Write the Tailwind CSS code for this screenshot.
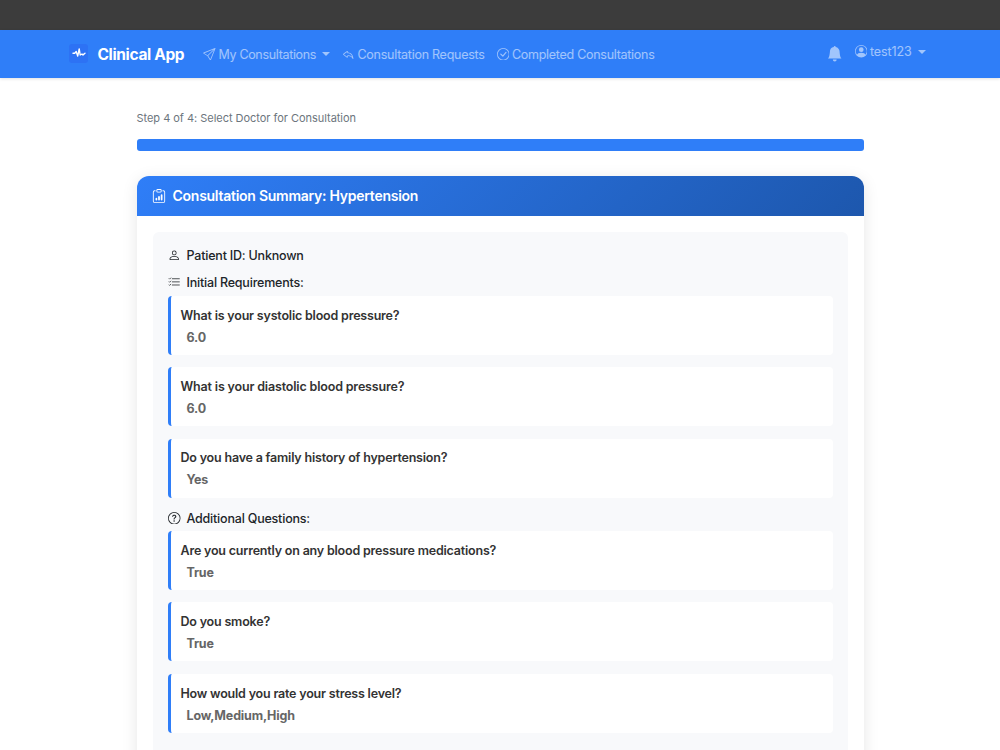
<!DOCTYPE html>
<html lang="en">
<head>
    <meta charset="UTF-8">
    <meta name="viewport" content="width=device-width, initial-scale=1.0">
    <title>Clinical App</title>
    <script src="https://cdn.jsdelivr.net/npm/@tailwindcss/browser@4"></script>
</head>
<body class="h-[750px] overflow-hidden bg-white font-['Inter',sans-serif] text-[12.5px] text-[#212529]">

    <div class="h-[29.5px] bg-[#3c3c3c]"></div>

    <!-- Navbar -->
    <nav class="flex h-[48.5px] items-center bg-[#2f7ef8] pl-[69px] pr-[74.5px] tracking-[-0.26px] text-white/55 shadow-[0_1px_3px_rgba(0,0,0,0.12)]">
        <div class="flex size-[19px] items-center justify-center rounded-[3px] bg-[#2d72f4]">
            <svg class="h-[13px] w-[14px] text-white" viewBox="0 0 14 13" fill="none" stroke="currentColor" stroke-width="1.4" stroke-linecap="round" stroke-linejoin="round">
                <path d="M1 6.2h1.7l1.5-1.7 1.5 4.6L7.2 1.9l1 6.1 1.8-1 1 .9 2-1.6"/>
            </svg>
        </div>
        <span class="ml-[9.5px] w-[105.5px] whitespace-nowrap pt-[2px] text-[15.5px] font-bold tracking-[-0.35px] text-white">Clinical App</span>
        <a class="flex items-center whitespace-nowrap">
            <svg class="mr-[3px] size-[12.5px]" viewBox="0 0 16 16" fill="currentColor"><path d="M15.854.146a.5.5 0 0 1 .11.54l-5.819 14.547a.75.75 0 0 1-1.329.124l-3.178-4.995L.643 7.184a.75.75 0 0 1 .124-1.33L15.314.037a.5.5 0 0 1 .54.11ZM6.636 10.07l2.761 4.338L14.13 2.576zm6.787-8.201L1.591 6.602l4.339 2.76z"/></svg>
            <span class="w-[103px] pt-[3px] tracking-[-0.33px]">My Consultations</span>
            <span class="border-x-[4px] border-t-[4px] border-x-transparent"></span>
        </a>
        <a class="ml-[12.5px] flex items-center whitespace-nowrap">
            <svg class="mr-[3px] size-[12.5px]" viewBox="0 0 16 16" fill="currentColor"><path d="M6.598 5.013a.144.144 0 0 1 .202.134V6.3a.5.5 0 0 0 .5.5c.667 0 2.013.005 3.3.822.984.624 1.99 1.76 2.595 3.876-1.02-.983-2.185-1.516-3.205-1.799a8.7 8.7 0 0 0-1.921-.306 7 7 0 0 0-.798.008h-.013l-.005.001h-.001L7.3 9.9l-.05-.498a.5.5 0 0 0-.45.498v1.153c0 .108-.11.176-.202.134L2.614 8.254l-.042-.028a.147.147 0 0 1 0-.252l.042-.028zM7.8 10.386q.103 0 .223.006c.434.02 1.034.086 1.7.271 1.326.368 2.896 1.202 3.94 3.08a.5.5 0 0 0 .933-.305c-.464-3.71-1.886-5.662-3.46-6.66-1.245-.79-2.527-.942-3.336-.971v-.66a1.144 1.144 0 0 0-1.767-.96l-3.994 2.94a1.147 1.147 0 0 0 0 1.946l3.994 2.94a1.144 1.144 0 0 0 1.767-.96z"/></svg>
            <span class="w-[127px] pt-[3px]">Consultation Requests</span>
        </a>
        <a class="ml-[12px] flex items-center whitespace-nowrap">
            <svg class="mr-[3px] size-[12.5px]" viewBox="0 0 16 16" fill="currentColor"><path d="M8 15A7 7 0 1 1 8 1a7 7 0 0 1 0 14m0 1A8 8 0 1 0 8 0a8 8 0 0 0 0 16"/><path d="M10.97 4.97a.235.235 0 0 0-.02.022L7.477 9.417 5.384 7.323a.75.75 0 0 0-1.06 1.06L6.97 11.03a.75.75 0 0 0 1.079-.02l3.992-4.99a.75.75 0 0 0-1.071-1.05"/></svg>
            <span class="pt-[3px] tracking-[-0.28px]">Completed Consultations</span>
        </a>
        <svg class="ml-auto mr-[12.5px] size-[15.5px]" viewBox="0 0 16 16" fill="currentColor"><path d="M8 16a2 2 0 0 0 2-2H6a2 2 0 0 0 2 2m.995-14.901a1 1 0 1 0-1.99 0A5 5 0 0 0 3 6c0 1.098-.5 6-2 7h14c-1.5-1-2-5.902-2-7 0-2.42-1.72-4.44-4.005-4.901"/></svg>
        <a class="mb-[4.5px] flex items-center whitespace-nowrap">
            <svg class="mr-[3px] size-[12.5px]" viewBox="0 0 16 16" fill="currentColor"><path d="M11 6a3 3 0 1 1-6 0 3 3 0 0 1 6 0"/><path fill-rule="evenodd" d="M0 8a8 8 0 1 1 16 0A8 8 0 0 1 0 8m8-7a7 7 0 0 0-5.468 11.37C3.242 11.226 4.805 10 8 10s4.757 1.225 5.468 2.37A7 7 0 0 0 8 1"/></svg>
            <span class="w-[47.5px] pt-[2px] tracking-[-0.1px]">test123</span>
            <span class="border-x-[4px] border-t-[4px] border-x-transparent"></span>
        </a>
    </nav>

    <main class="ml-[136.5px] w-[727.5px] pt-[31px]">
        <!-- Progress -->
        <p class="h-[29.5px] text-[11px] leading-[18px] tracking-[-0.03px] text-[#6c757d]">Step 4 of 4: Select Doctor for Consultation</p>
        <div class="h-[12.5px] rounded-[3px] bg-[#2f7ef8]"></div>

        <!-- Summary card -->
        <section class="mt-[25px] h-[700px] overflow-hidden rounded-[12px] bg-white shadow-[0_3px_16px_rgba(0,0,0,0.1)]">
            <header class="flex h-[40px] items-center bg-[linear-gradient(135deg,#2f7ef8,#1d57ad)] pl-[15.5px] text-white">
                <svg class="mr-[6.5px] size-[14px]" viewBox="0 0 16 16" fill="currentColor"><path d="M4 11a1 1 0 1 1 2 0v1a1 1 0 1 1-2 0zm6-4a1 1 0 1 1 2 0v5a1 1 0 1 1-2 0zM7 9a1 1 0 0 1 2 0v3a1 1 0 1 1-2 0z"/><path d="M4 1.5H3a2 2 0 0 0-2 2V14a2 2 0 0 0 2 2h10a2 2 0 0 0 2-2V3.5a2 2 0 0 0-2-2h-1v1h1a1 1 0 0 1 1 1V14a1 1 0 0 1-1 1H3a1 1 0 0 1-1-1V3.5a1 1 0 0 1 1-1h1z"/><path d="M9.5 1a.5.5 0 0 1 .5.5v1a.5.5 0 0 1-.5.5h-3a.5.5 0 0 1-.5-.5v-1a.5.5 0 0 1 .5-.5zm-3-1A1.5 1.5 0 0 0 5 1.5v1A1.5 1.5 0 0 0 6.5 4h3A1.5 1.5 0 0 0 11 2.5v-1A1.5 1.5 0 0 0 9.5 0z"/></svg>
                <h1 class="whitespace-nowrap pb-[1.5px] text-[14px] font-semibold tracking-[-0.26px]">Consultation Summary: Hypertension</h1>
            </header>

            <div class="mx-[16px] mt-[16px] h-[660px] rounded-[6px] bg-[#f8f9fb] pl-[15.5px] pr-[15px] pt-[13px] tracking-[-0.2px]">
                <h2 class="flex h-[20px] items-center font-medium">
                    <svg class="mr-[6px] size-[12.5px]" viewBox="0 0 16 16" fill="currentColor"><path d="M8 8a3 3 0 1 0 0-6 3 3 0 0 0 0 6m2-3a2 2 0 1 1-4 0 2 2 0 0 1 4 0m4 8c0 1-1 1-1 1H3s-1 0-1-1 1-4 6-4 6 3 6 4m-1-.004c-.001-.246-.154-.986-.832-1.664C11.516 10.68 10.289 10 8 10s-3.516.68-4.168 1.332c-.678.678-.83 1.418-.832 1.664z"/></svg>
                    <span class="pt-[2.5px]">Patient ID: Unknown</span>
                </h2>

                <h2 class="mb-[2.7px] mt-[8px] flex h-[20px] items-center font-medium">
                    <svg class="mb-[2px] mr-[6px] size-[12.5px]" viewBox="0 0 16 16" fill="none" stroke="currentColor" stroke-linecap="round" stroke-linejoin="round"><path d="M5.5 3.5h9M5.5 7.5h9M5.5 11.5h9M1.5 3.5l.5.5 1.5-1.5M1.5 7.5l.5.5 1.5-1.5M1.5 11.5l.5.5 1.5-1.5"/></svg>
                    Initial Requirements:
                </h2>
                <div class="space-y-[12.5px]">
                    <div class="h-[59px] rounded-[4px] border-l-[3px] border-[#2f7ef8] bg-white pl-[9.5px] pt-[9.9px]">
                        <p class="h-[22px] leading-[20px] font-semibold text-[#333]">What is your systolic blood pressure?</p>
                        <p class="pl-[6px] leading-[20px] font-bold text-[#666]">6.0</p>
                    </div>
                    <div class="h-[59px] rounded-[4px] border-l-[3px] border-[#2f7ef8] bg-white pl-[9.5px] pt-[9.7px]">
                        <p class="h-[22px] leading-[20px] font-semibold tracking-[-0.17px] text-[#333]">What is your diastolic blood pressure?</p>
                        <p class="pl-[6px] leading-[20px] font-bold text-[#666]">6.0</p>
                    </div>
                    <div class="h-[59px] rounded-[4px] border-l-[3px] border-[#2f7ef8] bg-white pl-[9.5px] pt-[9.7px]">
                        <p class="h-[22px] leading-[20px] font-semibold text-[#333]">Do you have a family history of hypertension?</p>
                        <p class="pl-[6px] leading-[20px] font-bold text-[#666]">Yes</p>
                    </div>
                </div>

                <h2 class="mb-[2.7px] mt-[10.5px] flex h-[20px] items-center font-medium">
                    <svg class="mr-[6px] size-[12.5px]" viewBox="0 0 16 16" fill="currentColor"><path d="M8 15A7 7 0 1 1 8 1a7 7 0 0 1 0 14m0 1A8 8 0 1 0 8 0a8 8 0 0 0 0 16"/><path d="M5.255 5.786a.237.237 0 0 0 .241.247h.825c.138 0 .248-.113.266-.25.09-.656.54-1.134 1.342-1.134.686 0 1.314.343 1.314 1.168 0 .635-.374.927-.965 1.371-.673.489-1.206 1.06-1.168 1.987l.003.217a.25.25 0 0 0 .25.246h.811a.25.25 0 0 0 .25-.25v-.105c0-.718.273-.927 1.01-1.486.609-.463 1.244-.977 1.244-2.056 0-1.511-1.276-2.241-2.673-2.241-1.267 0-2.655.59-2.75 2.286m1.557 5.763c0 .533.425.927 1.01.927.609 0 1.028-.394 1.028-.927 0-.552-.42-.94-1.029-.94-.584 0-1.009.388-1.009.94"/></svg>
                    <span class="pt-[2px]">Additional Questions:</span>
                </h2>
                <div class="space-y-[12.5px]">
                    <div class="h-[59px] rounded-[4px] border-l-[3px] border-[#2f7ef8] bg-white pl-[9.5px] pt-[9.7px]">
                        <p class="h-[22px] leading-[20px] font-semibold text-[#333]">Are you currently on any blood pressure medications?</p>
                        <p class="pl-[6px] leading-[20px] font-bold text-[#666]">True</p>
                    </div>
                    <div class="h-[59px] rounded-[4px] border-l-[3px] border-[#2f7ef8] bg-white pl-[9.5px] pt-[9.7px]">
                        <p class="h-[22px] leading-[20px] font-semibold text-[#333]">Do you smoke?</p>
                        <p class="pl-[6px] leading-[20px] font-bold text-[#666]">True</p>
                    </div>
                    <div class="h-[59px] rounded-[4px] border-l-[3px] border-[#2f7ef8] bg-white pl-[9.5px] pt-[9.7px]">
                        <p class="h-[22px] leading-[20px] font-semibold text-[#333]">How would you rate your stress level?</p>
                        <p class="pl-[6px] leading-[20px] font-bold tracking-[-0.15px] text-[#666]">Low,Medium,High</p>
                    </div>
                </div>
            </div>
        </section>
    </main>
</body>
</html>
